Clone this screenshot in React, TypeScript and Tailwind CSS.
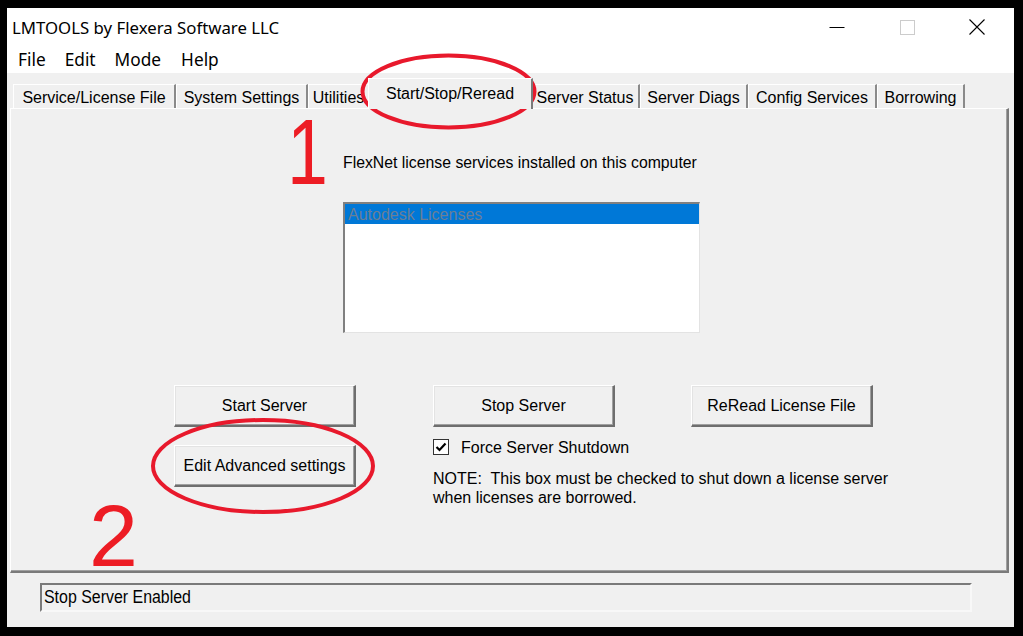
import React from "react";

const dlg = { fontFamily: '"Liberation Sans", Arial, sans-serif' };
const ui = { fontFamily: '"Noto Sans", "Open Sans", sans-serif' };

function Tab({ label, w, selected }: { label: string; w: number; selected?: boolean }) {
  if (selected) {
    return (
      <div
        className="relative z-10 -mx-[2px] -mb-[1px] h-[31px] bg-[#f0f0f0] border-l border-t border-white border-r-2 border-r-[#7a7a7a] flex items-start justify-center pt-[3px] text-[16px] text-black"
        style={{ width: w }}
      >
        {label}
      </div>
    );
  }
  return (
    <div
      className="h-[24px] bg-[#f0f0f0] border-l border-t border-white border-r-2 border-r-[#8a8a8a] flex items-start justify-center pt-[1px] text-[16px] text-black overflow-hidden whitespace-nowrap"
      style={{ width: w }}
    >
      {label}
    </div>
  );
}

function Btn({ children }: { children: React.ReactNode }) {
  return (
    <div className="w-[182px] h-[42px] bg-[#f0f0f0] border-t border-l border-t-white border-l-white border-r-2 border-b-2 border-r-[#6e6e6e] border-b-[#6e6e6e] shadow-[inset_-1px_-1px_0_#a0a0a0,inset_1px_1px_0_#e3e3e3] flex items-center justify-center text-[16px] text-black">
      {children}
    </div>
  );
}

export default function App() {
  return (
    <div className="relative w-[1023px] h-[636px] bg-black pt-[8px] pl-[7px] pr-[9px] pb-[9px] overflow-hidden" style={dlg}>
      <div className="w-full h-full bg-[#f0f0f0] flex flex-col">
        {/* Title bar */}
        <div className="h-[37px] bg-white flex items-center justify-between">
          <span className="pl-[5px] pt-[2px] text-[16.8px] text-black" style={ui}>
            LMTOOLS by Flexera Software LLC
          </span>
          <div className="flex h-full pr-[2px]">
            <div className="w-[70px] h-full flex items-center justify-center">
              <svg width="16" height="16" viewBox="0 0 16 16">
                <line x1="0.5" y1="8.5" x2="15.5" y2="8.5" stroke="#000" strokeWidth="1" />
              </svg>
            </div>
            <div className="w-[70px] h-full flex items-center justify-center">
              <svg width="16" height="16" viewBox="0 0 16 16">
                <rect x="1.5" y="1.5" width="14" height="14" fill="none" stroke="#cccccc" strokeWidth="1" />
              </svg>
            </div>
            <div className="w-[70px] h-full flex items-center justify-center">
              <svg width="16" height="16" viewBox="0 0 16 16">
                <path d="M0.5 0.5 L15.5 15.5 M15.5 0.5 L0.5 15.5" stroke="#000" strokeWidth="1.1" />
              </svg>
            </div>
          </div>
        </div>
        {/* Menu bar */}
        <div className="h-[28px] bg-white flex items-center pl-[11px] gap-[20px] text-[17.3px] text-black pt-[1px]" style={ui}>
          <span>File</span>
          <span className="-ml-[1px]">Edit</span>
          <span className="-ml-[1px]">Mode</span>
          <span>Help</span>
        </div>
        {/* Tabs + panel */}
        <div className="flex-1 flex flex-col pl-[3px] pr-[5px]">
          <div className="h-[35px] flex items-end pl-[3px]">
            <Tab label="Service/License File" w={163} />
            <Tab label="System Settings" w={132} />
            <Tab label="Utilities" w={62} />
            <Tab label="Start/Stop/Reread" w={165} selected />
            <Tab label="Server Status" w={109} />
            <Tab label="Server Diags" w={108} />
            <Tab label="Config Services" w={129} />
            <Tab label="Borrowing" w={88} />
          </div>
          <div className="flex-1 border-l border-t border-white border-r-2 border-b-2 border-r-[#7a7a7a] border-b-[#7a7a7a] shadow-[inset_-1px_-1px_0_#a0a0a0] flex flex-col pt-[45px]">
            <div className="pl-[332px] leading-[18px] text-[15.8px] text-black">
              FlexNet license services installed on this computer
            </div>
            <div className="ml-[332px] mt-[30px] w-[357px] h-[131px] bg-white border-t-2 border-l-2 border-t-[#808080] border-l-[#808080] border-r border-b border-r-[#e3e3e3] border-b-[#e3e3e3]">
              <div className="h-[20px] bg-[#0078d7] text-[#6a7f95] text-[16px] leading-[20px] pl-[3px] pt-[1px]">
                Autodesk Licenses
              </div>
            </div>
            <div className="mt-[52px] flex pl-[163px]">
              <Btn>Start Server</Btn>
              <div className="ml-[77px]">
                <Btn>Stop Server</Btn>
              </div>
              <div className="ml-[76px]">
                <Btn>ReRead License File</Btn>
              </div>
            </div>
            <div className="flex pl-[163px] items-start">
              <div className="mt-[18px]">
                <Btn>Edit Advanced settings</Btn>
              </div>
              <div className="ml-[77px] mt-[12px] flex flex-col">
                <div className="flex items-center h-[16px]">
                  <div className="w-[16px] h-[16px] bg-white border border-[#333] flex items-center justify-center">
                    <svg width="12" height="12" viewBox="0 0 12 12">
                      <path d="M1.5 6 L4.5 9 L10.5 2.5" fill="none" stroke="#000" strokeWidth="2.2" />
                    </svg>
                  </div>
                  <span className="ml-[12px] text-[16px] text-black leading-[18px] pt-[2px]">Force Server Shutdown</span>
                </div>
                <div className="mt-[14px] text-[16px] leading-[19px] text-black">
                  <div>NOTE:&nbsp; This box must be checked to shut down a license server</div>
                  <div>when licenses are borrowed.</div>
                </div>
              </div>
            </div>
          </div>
        </div>
        {/* Status bar */}
        <div className="h-[54px] pt-[10px] pl-[33px]">
          <div className="w-[932px] h-[29px] border-t-2 border-l-2 border-t-[#7a7a7a] border-l-[#7a7a7a] border-r-2 border-b-2 border-r-[#f8f8f8] border-b-[#f8f8f8] flex items-center pl-[2px]">
            <span
              className="inline-block origin-left scale-x-[0.91] text-[17.5px] text-black"
              style={{ fontFamily: '"Liberation Sans", sans-serif' }}
            >
              Stop Server Enabled
            </span>
          </div>
        </div>
      </div>

      {/* Annotations overlay */}
      <svg className="absolute left-0 top-0 pointer-events-none" width="1023" height="636" viewBox="0 0 1023 636">
        <ellipse cx="448.5" cy="91.5" rx="86" ry="36" fill="none" stroke="#e8192c" strokeWidth="4" />
        <ellipse cx="263" cy="466" rx="110" ry="46" fill="none" stroke="#e8192c" strokeWidth="4" />
      </svg>
      <span className="absolute left-[282px] top-[106px] text-[92px] leading-none text-[#ed1c24] origin-center scale-x-[0.8]" style={dlg}>
        1
      </span>
      <span className="absolute left-[89px] top-[492px] text-[88px] leading-none text-[#ed1c24]" style={dlg}>
        2
      </span>
    </div>
  );
}
